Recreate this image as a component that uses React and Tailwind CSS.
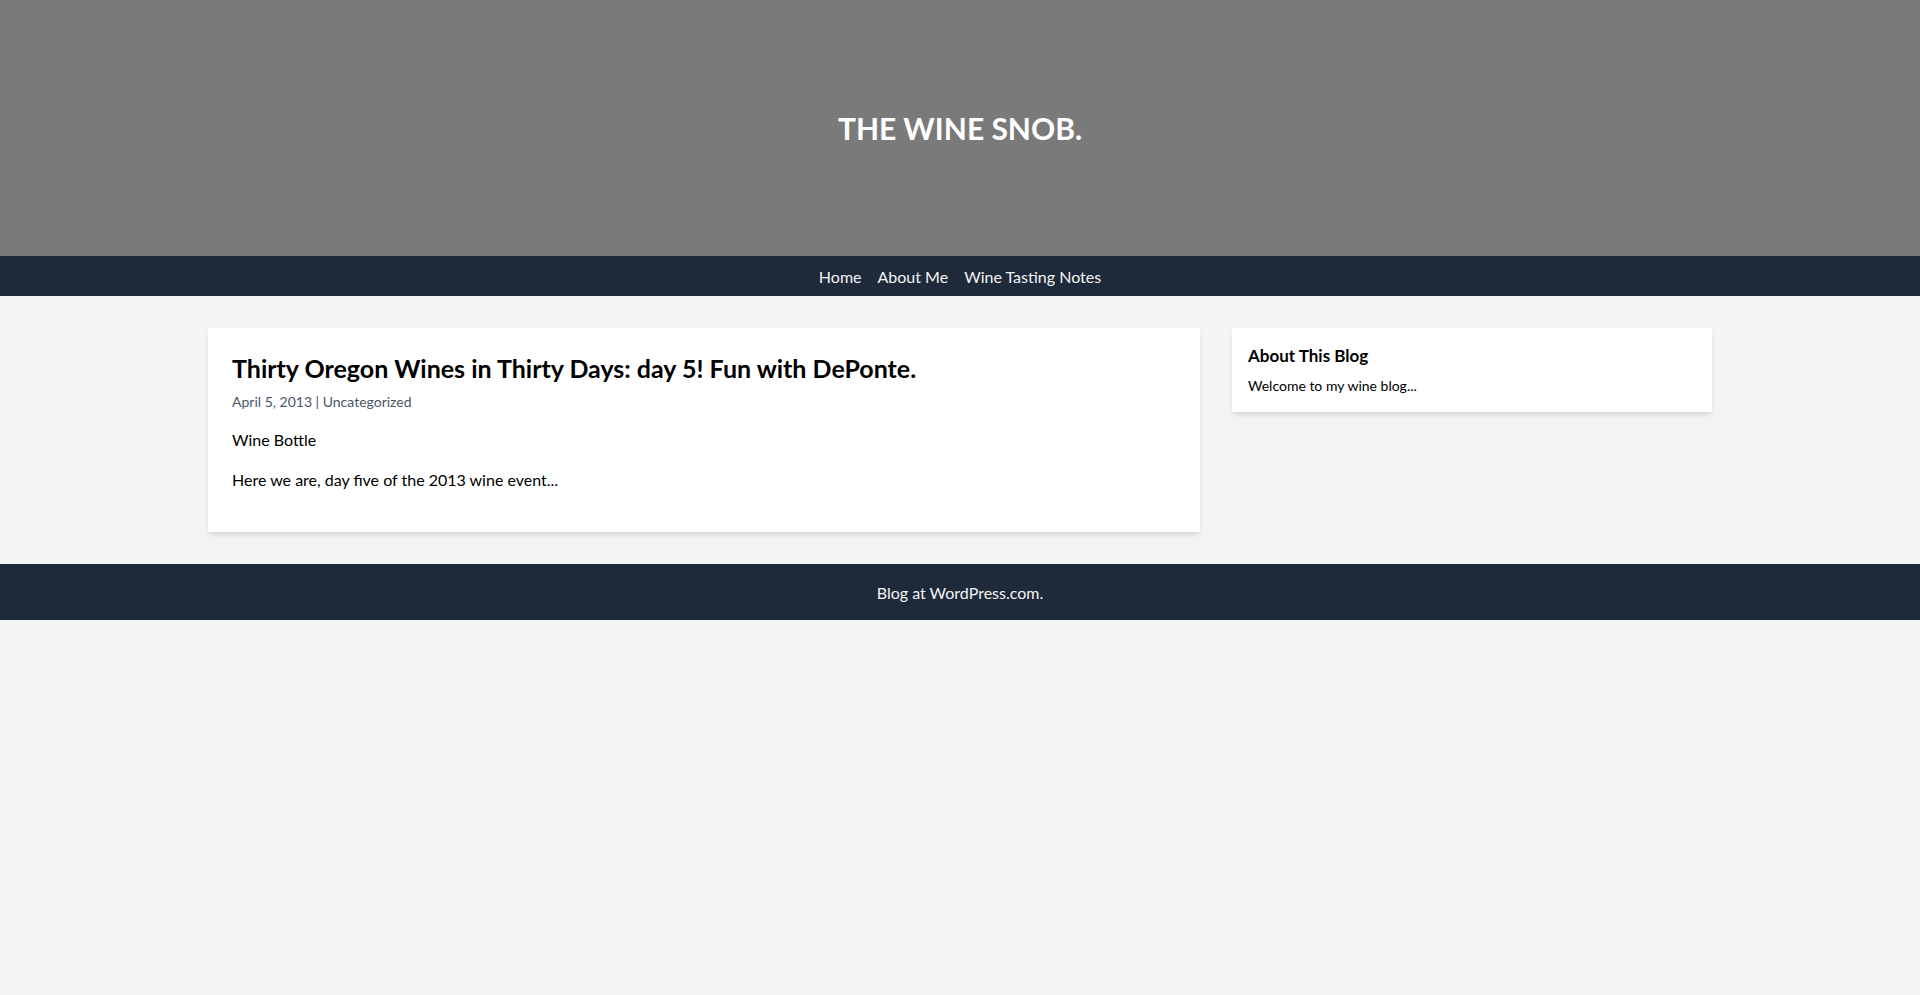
import React from 'react';

const navLinks = ['Home', 'About Me', 'Wine Tasting Notes'];

const Post = ({ title, date, category, children }) => (
  <article className="bg-white shadow-md p-6">
    <h2 className="text-[25px] leading-8 font-bold text-black">{title}</h2>
    <div className="mt-2 mb-4 text-sm text-gray-600">
      <span>{date}</span> | <a href="#" className="hover:underline">{category}</a>
    </div>
    <div className="text-base text-black">{children}</div>
  </article>
);

export default function App() {
  return (
    <div className="min-h-screen bg-gray-100 font-['Lato',sans-serif]">
      {/* header */}
      <header className="h-64 bg-[#7a7a7a] flex items-center justify-center">
        <h1 className="text-3xl font-bold text-white">THE WINE SNOB.</h1>
      </header>

      <nav className="bg-gray-800 pt-[9px] pb-[7px]">
        <ul className="flex justify-center gap-4 text-base text-gray-100">
          {navLinks.map(link => (
            <li key={link}>
              <a href="#" className="hover:underline">{link}</a>
            </li>
          ))}
        </ul>
      </nav>

      <main className="max-w-screen-2xl mx-auto px-4 py-8">
        <div className="grid grid-cols-3 gap-8 items-start">
          <div className="col-span-2">
            <Post
              title="Thirty Oregon Wines in Thirty Days: day 5! Fun with DePonte."
              date="April 5, 2013"
              category="Uncategorized"
            >
              <p className="mb-4">Wine Bottle</p>
              <p className="mb-4">Here we are, day five of the 2013 wine event...</p>
            </Post>
          </div>

          <aside className="bg-white shadow-md p-4">
            <h3 className="text-[17px] leading-6 font-bold text-black mb-2">About This Blog</h3>
            <p className="text-sm text-black">Welcome to my wine blog...</p>
          </aside>
        </div>
      </main>

      <footer className="bg-gray-800 pt-[17px] pb-[15px] text-center text-base text-gray-100">
        Blog at WordPress.com.
      </footer>
    </div>
  );
}
